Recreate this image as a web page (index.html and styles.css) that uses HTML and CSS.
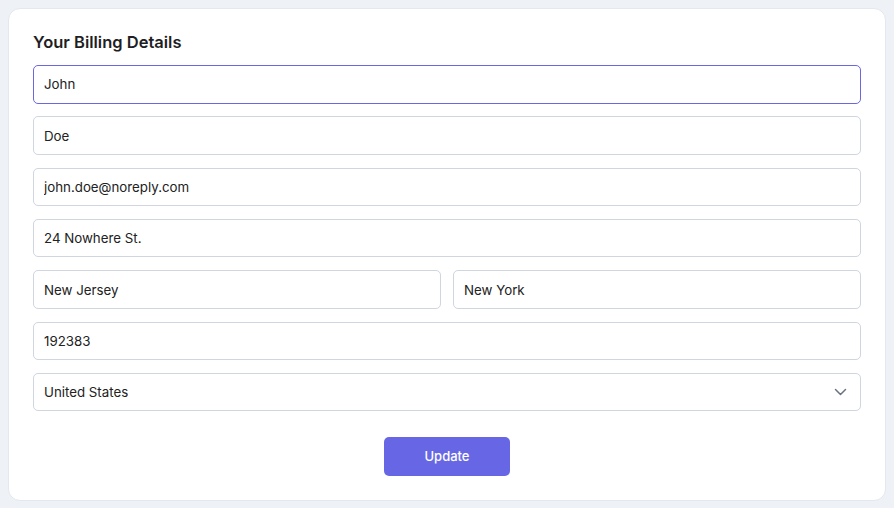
FILE: index.html
```html
<!DOCTYPE html>
<html lang="en">
<head>
<meta charset="utf-8">
<title>Billing Details</title>
<link rel="stylesheet" href="styles.css">
</head>
<body>
<div class="card">
  <h2 class="title">Your Billing Details</h2>
  <form class="form">
    <input class="field focused" type="text" value="John">
    <input class="field" type="text" value="Doe">
    <input class="field" type="text" value="john.doe@noreply.com">
    <input class="field" type="text" value="24 Nowhere St.">
    <div class="row">
      <input class="field" type="text" value="New Jersey">
      <input class="field" type="text" value="New York">
    </div>
    <input class="field" type="text" value="192383">
    <div class="select-wrap">
      <select class="field select">
        <option>United States</option>
      </select>
      <svg class="chevron" width="13" height="8" viewBox="0 0 13 8" fill="none" stroke="#6b7280" stroke-width="1.5" stroke-linecap="round" stroke-linejoin="round"><path d="M1.5 1.5l5 5 5-5"/></svg>
    </div>
    <div class="actions">
      <button class="btn" type="button">Update</button>
    </div>
  </form>
</div>
</body>
</html>
```
FILE: styles.css
```css
* { box-sizing: border-box; }
html, body { margin: 0; padding: 0; }
body {
  background: #eef1f6;
  padding: 8px;
  font-family: "Inter", "Noto Sans", sans-serif;
  color: #1f2937;
}
.card {
  background: #fff;
  border: 1px solid #e2e8f0;
  border-radius: 12px;
  padding: 23px 24px 23px;
  height: 493px;
}
.title {
  margin: 0 0 13px;
  font-size: 16.5px;
  font-weight: 600;
  line-height: 20px;
  color: #1e1e24;
}
.form {
  display: flex;
  flex-direction: column;
  gap: 12.83px;
}
.field {
  display: block;
  width: 100%;
  height: 38.5px;
  border: 1px solid #cfd6e0;
  border-radius: 5px;
  padding: 0 10px;
  font-family: inherit;
  font-size: 13.3px;
  color: #222;
  background: #fff;
  outline: none;
}
.focused { border-color: #6a67e0; }
.row {
  display: grid;
  grid-template-columns: 1fr 1fr;
  gap: 12px;
}
.select-wrap { position: relative; }
.select {
  appearance: none;
  -webkit-appearance: none;
}
.chevron {
  position: absolute;
  right: 14px;
  top: 15px;
}
.actions {
  display: flex;
  justify-content: center;
  padding-top: 12.67px;
}
.btn {
  width: 126px;
  height: 39px;
  border: none;
  border-radius: 5px;
  background: #6767e6;
  color: #fff;
  font-family: inherit;
  font-size: 13px;
  font-weight: 500;
}
```
